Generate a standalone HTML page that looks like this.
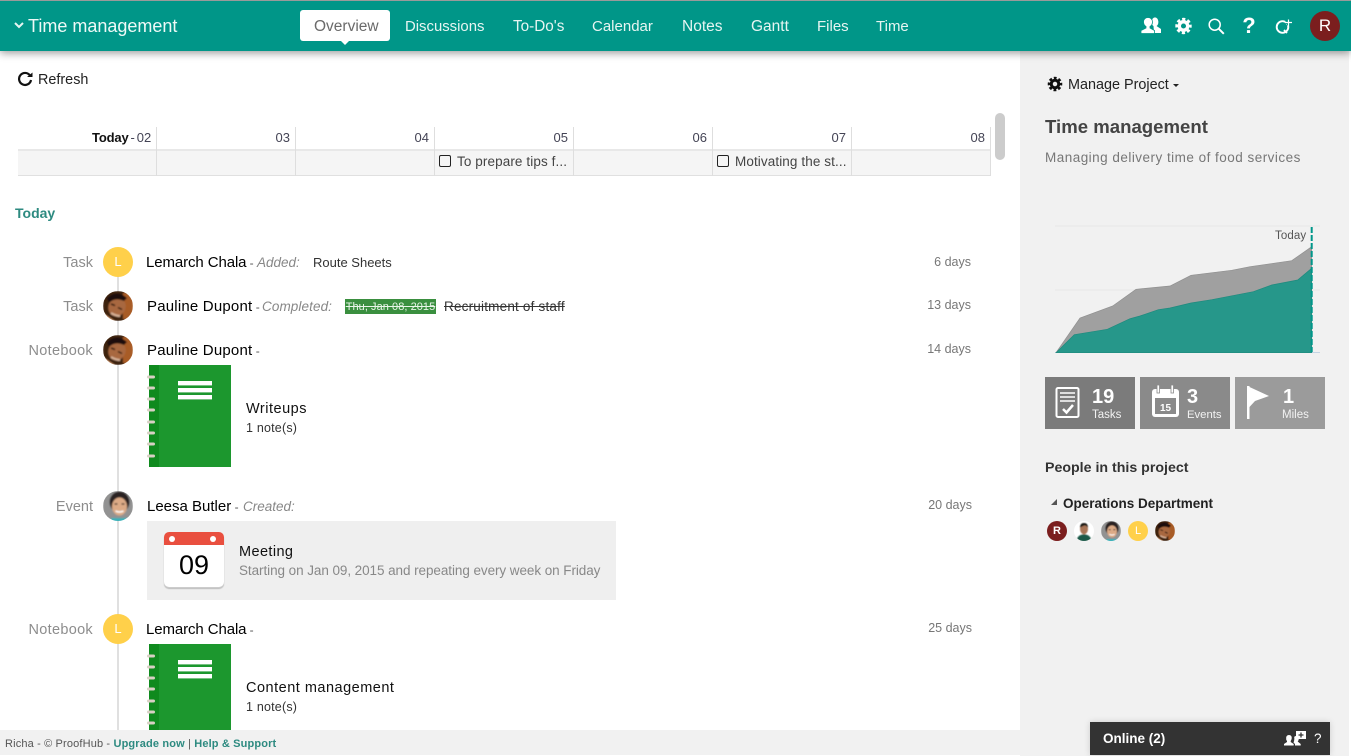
<!DOCTYPE html>
<html><head><meta charset="utf-8"><title>Time management</title>
<style>
html,body{margin:0;padding:0;width:1351px;height:756px;overflow:hidden;background:#fff;font-family:"Liberation Sans",Arial,sans-serif;color:#111}
.b{position:absolute}
.t{position:absolute;white-space:nowrap;line-height:20px;height:20px;margin-top:1px}
.nav{font-size:15.5px;color:#e6f5f2;top:16px}
.kind{font-size:14.5px;color:#8d8d8d;text-align:right;width:90px;left:3px}
.name{font-size:15px;color:#000}
.ago{font-size:12.5px;color:#777;text-align:right;width:60px}
.act{font-size:13.5px;color:#888;font-style:italic}
.day{font-size:13px;color:#445;text-align:right;width:60px;top:127px}
.v{position:absolute;width:1px;background:#dedede}
.d{font-size:12px;color:#555}
svg{position:absolute;display:block;overflow:visible}
</style></head>
<body>
<svg width="0" height="0" style="position:absolute">
<defs>
<clipPath id="c"><circle cx="15" cy="15" r="15"/></clipPath>
<filter id="s" x="-10%" y="-10%" width="120%" height="120%"><feGaussianBlur stdDeviation=".7"/></filter>
<symbol id="pau" viewBox="0 0 30 30"><g clip-path="url(#c)"><g filter="url(#s)"><rect width="30" height="30" fill="#3d2010"/><rect x="20" y="2" width="10" height="26" fill="#a85c25"/><path d="M0 22L12 30H0z" fill="#c98f63"/><ellipse cx="14" cy="16" rx="8.500" ry="9.500" transform="rotate(25 14 16)" fill="#a8683f"/><path d="M8 13l4 1.500M15 16.500l4 2" stroke="#2a1408" stroke-width="1.500"/><path d="M8 22q5 3 9 3" stroke="#d8b49a" stroke-width="2" fill="none"/><path d="M4 7Q14-2 24 7L21 10Q12 6 6 12z" fill="#1d0f08"/></g></g></symbol>
<symbol id="lee" viewBox="0 0 30 30"><g clip-path="url(#c)"><g filter="url(#s)"><rect width="30" height="30" fill="#929292"/><ellipse cx="16.500" cy="11" rx="10" ry="10.500" fill="#2c2320"/><ellipse cx="16.500" cy="15.500" rx="7.500" ry="9" fill="#dcaa86"/><path d="M12.500 20q4 2 8 0" stroke="#fff" stroke-width="1.500" fill="none"/><path d="M11.500 13h3M18.500 13h3" stroke="#3a2a20" stroke-width="1.200"/><rect x="8" y="27" width="18" height="5" fill="#3bb0b8"/></g></g></symbol>
<symbol id="man" viewBox="0 0 30 30"><g clip-path="url(#c)"><rect width="30" height="30" fill="#fff"/><g filter="url(#s)"><path d="M3 31Q5 20 15 20T27 31z" fill="#1e5a48"/><ellipse cx="15" cy="12" rx="6" ry="8" fill="#a87556"/><path d="M9 10Q9 3 15 3T21 10Q18 6 15 7T9 10z" fill="#1e1a18"/></g></g></symbol>
<symbol id="gear" viewBox="0 0 20 20"><circle cx="10" cy="10" r="4.700" fill="none" stroke="currentColor" stroke-width="3.800"/><circle cx="10" cy="10" r="7.600" fill="none" stroke="currentColor" stroke-width="3" stroke-dasharray="3.500 2.470" stroke-dashoffset="1.750"/></symbol>
<symbol id="nb" viewBox="0 0 88 102"><rect x="3" width="82" height="102" fill="#1c972e"/><rect x="3" width="10" height="102" fill="#0f8a1e"/><g fill="#fff"><rect x="32" y="16" width="34" height="4.400"/><rect x="32" y="23" width="34" height="4.400"/><rect x="32" y="30" width="34" height="4.400"/></g><g stroke="#d8d0c4" stroke-width="3" stroke-linecap="round"><path d="M2.500 12h5M2.500 23h5M2.500 34h5M2.500 45h5M2.500 57h5M2.500 68h5M2.500 79h5M2.500 91h5"/></g></symbol>
</defs></svg>

<!-- sidebar & footer backgrounds -->
<div class="b" style="left:1020px;top:51px;width:329px;height:705px;background:#f1f1f1"></div>
<div class="b" style="left:0;top:730px;width:1020px;height:25px;background:#f1f1f1"></div>

<!-- timeline -->
<div class="b" style="left:117px;top:262px;width:2px;height:468px;background:#e0e0e0"></div>

<!-- header -->
<div class="b" style="left:0;top:0;width:1351px;height:51px;background:#009688;border-top:1px solid #9a9a9a;box-sizing:border-box;box-shadow:0 2px 8px rgba(0,0,0,.4)"></div>
<svg style="left:14px;top:22px" width="10" height="7" viewBox="0 0 10 7"><path d="M1 1l4 4 4-4" fill="none" stroke="#e6f5f2" stroke-width="2"/></svg>
<div class="t" style="left:28px;top:15px;font-size:18px;color:#eef9f7">Time management</div>
<div class="b" style="left:300px;top:10px;width:90px;height:31px;background:#fff;border-radius:3px"></div>
<div class="b" style="left:340px;top:40px;width:0;height:0;border:5px solid transparent;border-top-color:#fff"></div>
<div class="t nav" style="left:314px;color:#6a6a6a">Overview</div>
<div class="t nav" style="left:405px;font-size:14.900px">Discussions</div>
<div class="t nav" style="left:513px;font-size:15.300px">To-Do's</div>
<div class="t nav" style="left:592px;font-size:15px">Calendar</div>
<div class="t nav" style="left:682px">Notes</div>
<div class="t nav" style="left:751px">Gantt</div>
<div class="t nav" style="left:817px;font-size:15px">Files</div>
<div class="t nav" style="left:876px;font-size:15px">Time</div>

<svg style="left:1141px;top:17px" width="20" height="17" viewBox="0 0 20 17"><ellipse cx="14" cy="5" rx="3.400" ry="4.600" fill="#fff"/><path d="M12.500 9h3l4.500 3v4h-7z" fill="#fff"/><path d="M0 16.500v-3l5-2.500V9.500C3.500 8.500 2.500 6.700 2.500 5 2.500 2.300 4.500 .5 7 .5S11.500 2.300 11.500 5c0 1.700-1 3.500-2.500 4.500V11l4.500 2.500v3z" fill="#fff" stroke="#009688" stroke-width=".8"/></svg>
<svg style="left:1174px;top:17px;color:#fff" width="19" height="18" viewBox="0 0 20 20"><use href="#gear"/></svg>
<svg style="left:1208px;top:18px" width="17" height="17" viewBox="0 0 17 17"><circle cx="6.700" cy="6.700" r="5.500" fill="none" stroke="#fff" stroke-width="1.500"/><path d="M10.800 10.800l5 5" stroke="#fff" stroke-width="2"/></svg>
<div class="t" style="left:1241px;top:15px;width:16px;text-align:center;font-size:22px;font-weight:bold;color:#fff">?</div>
<svg style="left:1275px;top:18px" width="18" height="17" viewBox="0 0 18 17"><circle cx="7.500" cy="9" r="5.800" fill="none" stroke="#fff" stroke-width="1.900"/><path d="M9 12l3 3" stroke="#fff" stroke-width="1.800"/><path d="M13.500 1.500v6M10.500 4.500h6.500" stroke="#009688" stroke-width="3"/><path d="M13.500 1.500v6M10.500 4.500h6.500" stroke="#fff" stroke-width="1.200"/></svg>
<div class="b" style="left:1310px;top:11px;width:30px;height:30px;border-radius:50%;background:#7b1e1e"></div>
<div class="t" style="left:1310px;top:15px;width:30px;text-align:center;font-size:17px;color:#fff">R</div>

<!-- refresh -->
<svg style="left:17px;top:71px" width="16" height="16" viewBox="0 0 16 16"><path d="M13 4.500A6 6 0 1 0 14 9" fill="none" stroke="#111" stroke-width="2.200"/><path d="M10 6h5.500V1.500z" fill="#111"/></svg>
<div class="t" style="left:38px;top:69px;font-size:14.400px;color:#222">Refresh</div>

<!-- calendar strip -->
<div class="b" style="left:18px;top:149px;width:973px;height:27px;background:#f5f5f5;border-top:2px solid #e8e8e8;border-bottom:1px solid #e0e0e0;box-sizing:border-box"></div>
<div class="v" style="left:156px;top:127px;height:49px"></div>
<div class="v" style="left:295px;top:127px;height:49px"></div>
<div class="v" style="left:434px;top:127px;height:49px"></div>
<div class="v" style="left:573px;top:127px;height:49px"></div>
<div class="v" style="left:712px;top:127px;height:49px"></div>
<div class="v" style="left:851px;top:127px;height:49px"></div>
<div class="v" style="left:990px;top:127px;height:49px"></div>
<div class="t" style="left:92px;top:127px;font-size:13px;color:#445;word-spacing:-1.700px"><b style="color:#111;letter-spacing:-.15px">Today</b> - 02</div>
<div class="t day" style="left:230px">03</div>
<div class="t day" style="left:369px">04</div>
<div class="t day" style="left:508px">05</div>
<div class="t day" style="left:647px">06</div>
<div class="t day" style="left:786px">07</div>
<div class="t day" style="left:925px">08</div>
<div class="b" style="left:439px;top:155px;width:12px;height:12px;border:1.200px solid #222;border-radius:2px;box-sizing:border-box"></div>
<div class="t" style="left:457px;top:151px;font-size:13.500px;letter-spacing:.1px;color:#444">To prepare tips f...</div>
<div class="b" style="left:717px;top:155px;width:12px;height:12px;border:1.200px solid #222;border-radius:2px;box-sizing:border-box"></div>
<div class="t" style="left:735px;top:151px;font-size:13.500px;letter-spacing:.1px;color:#444">Motivating the st...</div>
<div class="b" style="left:995px;top:113px;width:10px;height:47px;background:#ccc;border-radius:5px"></div>

<div class="t" style="left:15px;top:202px;font-size:14px;font-weight:bold;color:#2d8a80">Today</div>

<!-- row 1 -->
<div class="t kind" style="top:252px">Task</div>
<div class="b" style="left:103px;top:247px;width:30px;height:30px;border-radius:50%;background:#ffd04a;color:#fff;font-size:13px;line-height:30px;text-align:center">L</div>
<div class="t name" style="left:146px;top:252px;letter-spacing:-.1px">Lemarch Chala<span class="d"> - </span></div>
<div class="t act" style="left:257px;top:252px">Added:</div>
<div class="t" style="left:313px;top:252px;font-size:13px;color:#333">Route Sheets</div>
<div class="t ago" style="left:911px;top:251px">6 days</div>

<!-- row 2 -->
<div class="t kind" style="top:296px">Task</div>
<svg style="left:103px;top:291px" width="30" height="30"><use href="#pau"/></svg>
<div class="t name" style="left:147px;top:296px;letter-spacing:.2px">Pauline Dupont<span class="d" style="letter-spacing:0"> - </span></div>
<div class="t act" style="left:262px;top:296px;letter-spacing:.1px">Completed:</div>
<div class="t" style="left:345px;top:298px;width:91px;height:15px;line-height:16px;background:#3a8f3f;color:#e8f5e8;font-size:11px;letter-spacing:.05px;text-align:center;text-decoration:line-through">Thu, Jan 08, 2015</div>
<div class="t" style="left:444px;top:296px;font-size:13.500px;letter-spacing:.2px;color:#333;text-decoration:line-through">Recruitment of staff</div>
<div class="t ago" style="left:911px;top:294px">13 days</div>

<!-- row 3 -->
<div class="t kind" style="top:340px;letter-spacing:.3px">Notebook</div>
<svg style="left:103px;top:335px" width="30" height="30"><use href="#pau"/></svg>
<div class="t name" style="left:147px;top:340px;letter-spacing:.2px">Pauline Dupont<span class="d" style="letter-spacing:0"> - </span></div>
<div class="t ago" style="left:911px;top:338px">14 days</div>
<svg style="left:146px;top:365px" width="88" height="102"><use href="#nb"/></svg>
<div class="t" style="left:246px;top:398px;font-size:14.500px;letter-spacing:.5px;color:#111">Writeups</div>
<div class="t" style="left:246px;top:417px;font-size:12.500px;letter-spacing:.2px;color:#333">1 note(s)</div>

<!-- row 4 -->
<div class="t kind" style="top:496px">Event</div>
<svg style="left:103px;top:491px" width="30" height="30"><use href="#lee"/></svg>
<div class="t name" style="left:147px;top:496px">Leesa Butler<span class="d"> - </span></div>
<div class="t act" style="left:243px;top:496px">Created:</div>
<div class="t ago" style="left:912px;top:494px">20 days</div>
<div class="b" style="left:147px;top:521px;width:469px;height:79px;background:#efefef"></div>
<div class="b" style="left:164px;top:532px;width:60px;height:55px;background:#fff;border-radius:5px;box-shadow:0 1px 0 #ccc,0 2px 1px #bbb"></div>
<div class="b" style="left:164px;top:532px;width:60px;height:13px;background:#e94f3f;border-radius:5px 5px 0 0"></div>
<div class="b" style="left:169px;top:536px;width:6px;height:6px;border-radius:50%;background:#fff"></div>
<div class="b" style="left:210px;top:536px;width:6px;height:6px;border-radius:50%;background:#fff"></div>
<div class="t" style="left:164px;top:554px;width:60px;text-align:center;font-size:27px;color:#000">09</div>
<div class="t" style="left:239px;top:541px;font-size:14.500px;letter-spacing:.4px;color:#111">Meeting</div>
<div class="t" style="left:239px;top:560px;font-size:13.500px;letter-spacing:-.07px;color:#888">Starting on Jan 09, 2015 and repeating every week on Friday</div>

<!-- row 5 -->
<div class="t kind" style="top:619px;letter-spacing:.3px">Notebook</div>
<div class="b" style="left:103px;top:614px;width:30px;height:30px;border-radius:50%;background:#ffd04a;color:#fff;font-size:13px;line-height:30px;text-align:center">L</div>
<div class="t name" style="left:146px;top:619px;letter-spacing:-.1px">Lemarch Chala<span class="d"> - </span></div>
<div class="t ago" style="left:912px;top:617px">25 days</div>
<div class="b" style="left:146px;top:644px;width:88px;height:86px;overflow:hidden"><svg style="left:0;top:0" width="88" height="102"><use href="#nb"/></svg></div>
<div class="t" style="left:246px;top:677px;font-size:14.500px;letter-spacing:.5px;color:#111">Content management</div>
<div class="t" style="left:246px;top:696px;font-size:12.500px;letter-spacing:.2px;color:#333">1 note(s)</div>

<!-- footer -->
<div class="t" style="left:5px;top:733px;font-size:11px;color:#555;letter-spacing:.15px">Richa - © ProofHub - <b style="font-weight:bold;color:#2d8a80">Upgrade now</b> | <b style="font-weight:bold;color:#2d8a80">Help &amp; Support</b></div>

<!-- sidebar -->
<svg style="left:1047px;top:76px;color:#111" width="16" height="16" viewBox="0 0 20 20"><use href="#gear"/></svg>
<div class="t" style="left:1068px;top:74px;font-size:14.400px;color:#222">Manage Project</div>
<div class="b" style="left:1173px;top:84px;width:0;height:0;border:3px solid transparent;border-top:3px solid #222"></div>
<div class="t" style="left:1045px;top:116px;font-size:18.600px;font-weight:bold;color:#444">Time management</div>
<div class="t" style="left:1045px;top:147px;font-size:13.500px;letter-spacing:.48px;color:#777">Managing delivery time of food services</div>

<svg style="left:0;top:0" width="1351" height="756">
<path d="M1055 226H1320M1055 290H1320" stroke="#e8e8e8" stroke-width="1"/>
<path d="M1055 352.500H1320" stroke="#c4d4e4" stroke-width="1"/>
<path d="M1056 352.700L1080 318 1112.700 306 1136 289.300 1170 286 1191 275.300 1231.700 270.300 1250 266.700 1291.700 260.700 1311.700 246.700V352.700z" fill="#a0a0a0" stroke="#909090" stroke-width=".7"/>
<path d="M1056 352.700L1074.300 334.700 1107.300 329.300 1130 318.700 1140 316 1158.300 309.700 1170 308 1191 303 1211.700 299.700 1253.300 291.700 1271.700 285 1297.700 280 1311.700 268.300V352.700z" fill="#26978a" stroke="#1f8a7e" stroke-width=".7"/>
<path d="M1311.700 227V352" stroke="#00968a" stroke-width="2" stroke-dasharray="6 2"/>
</svg>
<div class="t" style="left:1275px;top:225px;font-size:11.500px;letter-spacing:.1px;color:#555">Today</div>

<div class="b" style="left:1045px;top:377px;width:90px;height:52px;background:#7b7b7b"></div>
<div class="b" style="left:1140px;top:377px;width:90px;height:52px;background:#8a8a8a"></div>
<div class="b" style="left:1235px;top:377px;width:90px;height:52px;background:#9b9b9b"></div>
<svg style="left:1055px;top:387px" width="26" height="32" viewBox="0 0 26 32"><rect x="1.500" y="1" width="22" height="29" rx="1.500" fill="none" stroke="#fff" stroke-width="2"/><path d="M5 6h15M5 10h15M5 14h15" stroke="#fff" stroke-width="1.500"/><path d="M8 22l3.500 3.500L18 18" fill="none" stroke="#fff" stroke-width="2.500"/></svg>
<div class="t" style="left:1092px;top:386px;font-size:20px;font-weight:bold;color:#fff">19</div>
<div class="t" style="left:1092px;top:404px;font-size:11.500px;color:#f2f2f2">Tasks</div>
<svg style="left:1152px;top:385px" width="28" height="33" viewBox="0 0 28 33"><rect x="0" y="4" width="27" height="28" rx="3" fill="#fff"/><rect x="3" y="13" width="21" height="16" fill="#8a8a8a"/><rect x="5" y="0" width="2.500" height="8" fill="#fff" stroke="#8a8a8a" stroke-width=".8"/><rect x="19" y="0" width="2.500" height="8" fill="#fff" stroke="#8a8a8a" stroke-width=".8"/><text x="13.500" y="26" font-size="10" font-weight="bold" fill="#fff" text-anchor="middle" font-family="Liberation Sans,sans-serif">15</text></svg>
<div class="t" style="left:1187px;top:386px;font-size:20px;font-weight:bold;color:#fff">3</div>
<div class="t" style="left:1187px;top:404px;font-size:11.300px;color:#f2f2f2">Events</div>
<svg style="left:1247px;top:386px" width="24" height="34" viewBox="0 0 24 34"><rect x="0" y="0" width="2.500" height="33" fill="#fff"/><path d="M2.500 1L22 10 8 15 2.500 21z" fill="#fff"/></svg>
<div class="t" style="left:1283px;top:386px;font-size:20px;font-weight:bold;color:#fff">1</div>
<div class="t" style="left:1282px;top:404px;font-size:11.500px;color:#f2f2f2">Miles</div>

<div class="t" style="left:1045px;top:457px;font-size:14.200px;font-weight:bold;color:#333">People in this project</div>
<div class="b" style="left:1051px;top:499px;width:0;height:0;border-style:solid;border-width:0 0 6px 6px;border-color:transparent transparent #555 transparent"></div>
<div class="t" style="left:1063px;top:493px;font-size:13.500px;font-weight:bold;color:#222">Operations Department</div>
<div class="b" style="left:1047px;top:521px;width:20px;height:20px;border-radius:50%;background:#7b1e1e;color:#fff;font-size:11px;font-weight:bold;line-height:20px;text-align:center">R</div>
<svg style="left:1074px;top:521px" width="20" height="20" viewBox="0 0 30 30"><use href="#man"/></svg>
<svg style="left:1101px;top:521px" width="20" height="20" viewBox="0 0 30 30"><use href="#lee"/></svg>
<div class="b" style="left:1128px;top:521px;width:20px;height:20px;border-radius:50%;background:#ffd04a;color:#fff;font-size:11px;line-height:20px;text-align:center">L</div>
<svg style="left:1155px;top:521px" width="20" height="20" viewBox="0 0 30 30"><use href="#pau"/></svg>

<!-- online -->
<div class="b" style="left:1090px;top:722px;width:240px;height:33px;background:#333;box-shadow:0 0 6px rgba(0,0,0,.15)"></div>
<div class="t" style="left:1103px;top:728px;font-size:13.500px;font-weight:bold;color:#fff">Online (2)</div>
<svg style="left:1284px;top:731px" width="22" height="15" viewBox="0 0 22 15"><rect x="12" y="0" width="10" height="8" fill="#fff"/><path d="M17 1.500v5M14.500 4h5" stroke="#333" stroke-width="1.300"/><path d="M5 4c2 0 3 1.500 2.700 3.500-.2 1-.7 2-1 2.500v1l3 2v1.500H0V13l3-2v-1C2.500 9.500 2 8.500 2.200 7.500 2 5.500 3 4 5 4z" fill="#fff"/><path d="M12 5c2 0 3 1.500 2.700 3.500-.2 1-.7 1.500-1 2l3 2.500v1.500H11V13l-1.500-1.500c.8-1.500 1-4 .7-5.500.4-.6 1-1 1.800-1z" fill="#fff"/></svg>
<div class="t" style="left:1314px;top:728px;font-size:13.500px;color:#fff">?</div>
</body></html>
